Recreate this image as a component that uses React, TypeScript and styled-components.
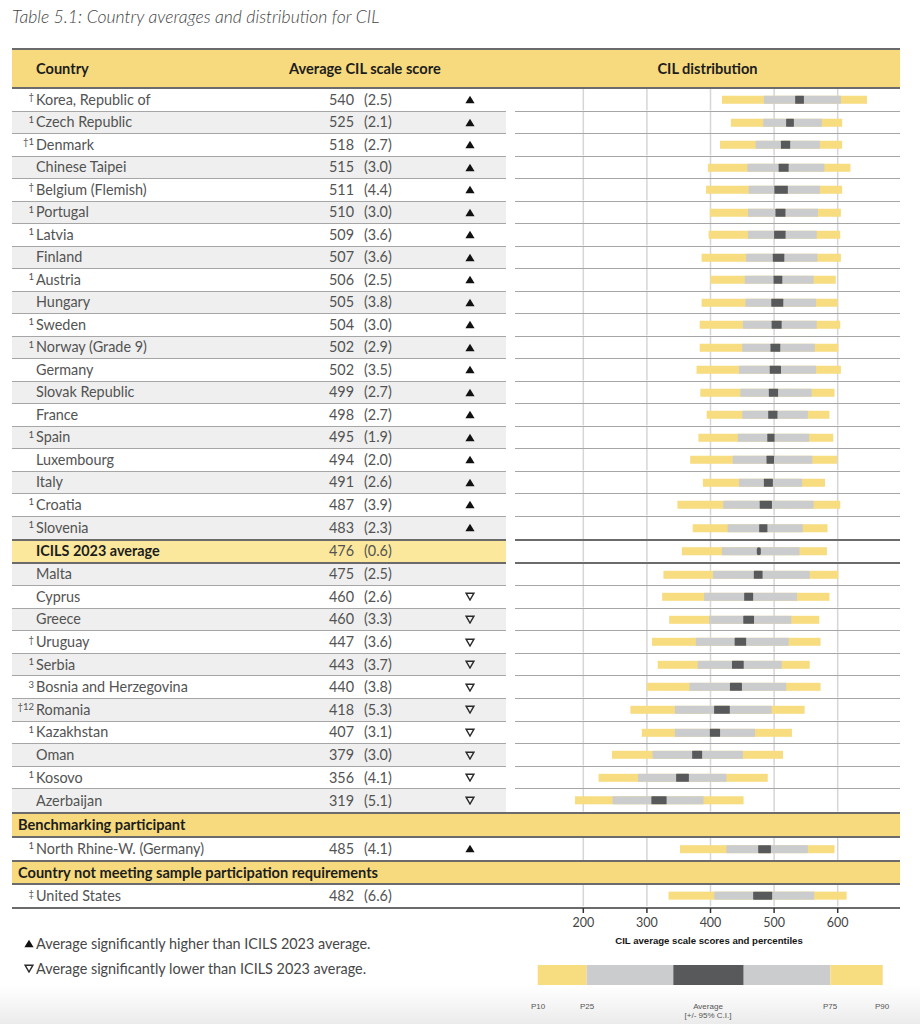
import React from 'react';
import styled, { createGlobalStyle } from 'styled-components';

const GlobalStyle = createGlobalStyle`
  html, body { margin: 0; padding: 0; background: #fff; }
`;

const CHART_W = 385;
const X200 = 68.3;
const PX = 0.636;
const xOf = (v: number) => X200 + (v - 200) * PX;
const GRID = [200, 300, 400, 500, 600];

const C = {
  yellow: '#f7da7e',
  avgYellow: '#fbe89c',
  zebra: '#eeefee',
  barYellow: '#f7dc80',
  barGray: '#cbcccd',
  barDark: '#58595b',
  rule: '#a6a6a6',
  dark: '#6b6b6b',
  grid: '#d6d6d6',
  text: '#535353',
};

type Sig = 'up' | 'down' | undefined;
type Entry = {
  sup?: string;
  name: string;
  score: number;
  se: string;
  sig?: Sig;
  p: [number, number, number, number];
};

const above: Entry[] = [
  { sup: '†', name: 'Korea, Republic of', score: 540, se: '2.5', sig: 'up', p: [418, 484, 605, 646] },
  { sup: '1', name: 'Czech Republic', score: 525, se: '2.1', sig: 'up', p: [432, 483, 575, 607] },
  { sup: '†1', name: 'Denmark', score: 518, se: '2.7', sig: 'up', p: [415, 471, 572, 607] },
  { name: 'Chinese Taipei', score: 515, se: '3.0', sig: 'up', p: [396, 458, 579, 620] },
  { sup: '†', name: 'Belgium (Flemish)', score: 511, se: '4.4', sig: 'up', p: [393, 460, 572, 607] },
  { sup: '1', name: 'Portugal', score: 510, se: '3.0', sig: 'up', p: [399, 459, 569, 605] },
  { sup: '1', name: 'Latvia', score: 509, se: '3.6', sig: 'up', p: [397, 459, 567, 604] },
  { name: 'Finland', score: 507, se: '3.6', sig: 'up', p: [386, 456, 568, 605] },
  { sup: '1', name: 'Austria', score: 506, se: '2.5', sig: 'up', p: [400, 454, 562, 597] },
  { name: 'Hungary', score: 505, se: '3.8', sig: 'up', p: [386, 455, 566, 600] },
  { sup: '1', name: 'Sweden', score: 504, se: '3.0', sig: 'up', p: [383, 451, 567, 604] },
  { sup: '1', name: 'Norway (Grade 9)', score: 502, se: '2.9', sig: 'up', p: [383, 450, 564, 601] },
  { name: 'Germany', score: 502, se: '3.5', sig: 'up', p: [378, 445, 566, 605] },
  { name: 'Slovak Republic', score: 499, se: '2.7', sig: 'up', p: [384, 447, 559, 595] },
  { name: 'France', score: 498, se: '2.7', sig: 'up', p: [394, 450, 553, 587] },
  { sup: '1', name: 'Spain', score: 495, se: '1.9', sig: 'up', p: [381, 443, 555, 593] },
  { name: 'Luxembourg', score: 494, se: '2.0', sig: 'up', p: [368, 435, 560, 599] },
  { name: 'Italy', score: 491, se: '2.6', sig: 'up', p: [388, 445, 544, 580] },
  { sup: '1', name: 'Croatia', score: 487, se: '3.9', sig: 'up', p: [348, 420, 562, 604] },
  { sup: '1', name: 'Slovenia', score: 483, se: '2.3', sig: 'up', p: [372, 427, 545, 584] },
];

const average: Entry = { name: 'ICILS 2023 average', score: 476, se: '0.6', p: [355, 418, 540, 583] };

const below: Entry[] = [
  { name: 'Malta', score: 475, se: '2.5', p: [326, 404, 556, 601] },
  { name: 'Cyprus', score: 460, se: '2.6', sig: 'down', p: [324, 390, 536, 587] },
  { name: 'Greece', score: 460, se: '3.3', sig: 'down', p: [335, 398, 527, 571] },
  { sup: '†', name: 'Uruguay', score: 447, se: '3.6', sig: 'down', p: [308, 377, 523, 573] },
  { sup: '1', name: 'Serbia', score: 443, se: '3.7', sig: 'down', p: [317, 380, 512, 556] },
  { sup: '3', name: 'Bosnia and Herzegovina', score: 440, se: '3.8', sig: 'down', p: [300, 367, 519, 573] },
  { sup: '†12', name: 'Romania', score: 418, se: '5.3', sig: 'down', p: [274, 344, 496, 548] },
  { sup: '1', name: 'Kazakhstan', score: 407, se: '3.1', sig: 'down', p: [292, 344, 470, 528] },
  { name: 'Oman', score: 379, se: '3.0', sig: 'down', p: [245, 309, 451, 514] },
  { sup: '1', name: 'Kosovo', score: 356, se: '4.1', sig: 'down', p: [224, 286, 425, 490] },
  { name: 'Azerbaijan', score: 319, se: '5.1', sig: 'down', p: [187, 246, 389, 452] },
];

const benchmark: Entry = { sup: '1', name: 'North Rhine-W. (Germany)', score: 485, se: '4.1', sig: 'up', p: [352, 425, 553, 595] };
const usa: Entry = { sup: '‡', name: 'United States', score: 482, se: '6.6', p: [334, 406, 563, 614] };

/* ---------- layout ---------- */

const Page = styled.div`
  width: 920px;
  height: 1024px;
  box-sizing: border-box;
  padding: 6px 0 0 12px;
  background: linear-gradient(to bottom, #fff 0, #fff 986px, #ebebeb 1024px);
  font-family: Lato, 'Open Sans', 'Liberation Sans', sans-serif;
  color: ${C.text};
  overflow: hidden;
`;

const Title = styled.h1`
  margin: 0;
  font-size: 17.6px;
  line-height: 22px;
  font-style: italic;
  font-weight: 300;
  color: #444;
`;

const Table = styled.div`
  margin-top: 20px;
  width: 888px;
`;

const Columns = `
  display: grid;
  grid-template-columns: 494px 9px 385px;
`;

const HeaderRow = styled.div`
  ${Columns}
  height: 41px;
  box-sizing: border-box;
  align-items: center;
  background: ${C.yellow};
  border-top: 2px solid ${C.dark};
  border-bottom: 2px solid ${C.dark};
  font-size: 14.6px;
  font-weight: 700;
  color: #1d1d1d;
`;

const HeaderLeft = styled.div`
  display: grid;
  grid-template-columns: 277px auto;
`;

const HeaderCountry = styled.span`
  padding-left: 24px;
`;

const HeaderChart = styled.div`
  grid-column: 3;
  text-align: center;
`;

const DataRow = styled.div<{ $h: number; $closing?: boolean }>`
  ${Columns}
  height: ${(p) => p.$h}px;
  box-sizing: border-box;
  border-bottom: ${(p) => (p.$closing ? `2px solid ${C.dark}` : 'none')};
`;

type Tone = 'white' | 'gray' | 'avg';
type Edge = 'thin' | 'none' | 'thick';

const edgeCss = (e: Edge) =>
  e === 'thin' ? `1px solid ${C.rule}` : e === 'thick' ? `2px solid ${C.dark}` : 'none';

const LeftCell = styled.div<{ $tone: Tone; $top: Edge; $bottom: Edge }>`
  display: grid;
  grid-template-columns: 24px 282px 36px 10px 72px 1fr;
  align-items: center;
  box-sizing: border-box;
  background: ${(p) => (p.$tone === 'gray' ? C.zebra : p.$tone === 'avg' ? C.avgYellow : '#fff')};
  border-top: ${(p) => edgeCss(p.$top)};
  border-bottom: ${(p) => edgeCss(p.$bottom)};
  font-size: 14.4px;
  line-height: 18px;
  white-space: nowrap;
`;

const Sup = styled.span`
  font-size: 9.5px;
  line-height: 9px;
  text-align: right;
  padding-right: 2px;
  transform: translateY(-3px);
`;

const Name = styled.span<{ $strong?: boolean }>`
  font-weight: ${(p) => (p.$strong ? 700 : 400)};
  color: ${(p) => (p.$strong ? '#1d1d1d' : C.text)};
`;

const Score = styled.span`
  grid-column: 3;
  text-align: right;
`;

const SE = styled.span`
  grid-column: 5;
`;

const SigCell = styled.span`
  grid-column: 6;
  padding-left: 29px;
  display: flex;
  align-items: center;
`;

const ChartCell = styled.div<{ $top: Edge; $bottom: Edge }>`
  grid-column: 3;
  box-sizing: border-box;
  border-top: ${(p) => edgeCss(p.$top)};
  border-bottom: ${(p) => edgeCss(p.$bottom)};
  overflow: hidden;
`;

const ChartSvg = styled.svg`
  display: block;
  width: ${CHART_W}px;
  height: 100%;
`;

const SectionRow = styled.div`
  height: 25.5px;
  box-sizing: border-box;
  display: flex;
  align-items: center;
  padding: 0 0 1px 6px;
  background: ${C.yellow};
  border-top: 2px solid ${C.dark};
  border-bottom: 2px solid ${C.dark};
  font-size: 14.6px;
  font-weight: 700;
  color: #1d1d1d;
`;

const Footer = styled.div`
  ${Columns}
  width: 888px;
`;

const Notes = styled.div`
  padding: 22px 0 0 12px;
  display: flex;
  flex-direction: column;
  font-size: 14.4px;
  line-height: 25px;
  color: #474747;
`;

const Note = styled.div`
  display: flex;
  align-items: center;
  gap: 2px;
`;

const ChartFoot = styled.div`
  grid-column: 3;
  display: flex;
  flex-direction: column;
`;

const AxisSvg = styled.svg`
  display: block;
  width: ${CHART_W}px;
  height: 26px;
  margin-top: -1px;
`;

const Caption = styled.div`
  font-family: 'Liberation Sans', Arial, sans-serif;
  font-size: 9.6px;
  font-weight: 700;
  line-height: 14px;
  color: #151515;
  text-align: center;
  padding-left: 3px;
`;

const LegendSvg = styled.svg`
  display: block;
  width: ${CHART_W}px;
  height: 75px;
`;

/* ---------- drawings ---------- */

function UpTri() {
  return (
    <svg width="10" height="9" viewBox="0 0 10 9">
      <path d="M5 0.8 L9.6 8.2 L0.4 8.2 Z" fill="#111" />
    </svg>
  );
}

function DownTri() {
  return (
    <svg width="10" height="9" viewBox="0 0 10 9">
      <path d="M1.1 1.2 L8.9 1.2 L5 8 Z" fill="none" stroke="#2a2a2a" strokeWidth="1.4" strokeLinejoin="miter" />
    </svg>
  );
}

function Sign({ sig }: { sig: Sig }) {
  if (sig === 'up') return <UpTri />;
  if (sig === 'down') return <DownTri />;
  return null;
}

function Distribution({ e }: { e: Entry }) {
  const [p10, p25, p75, p90] = e.p;
  const half = 1.96 * parseFloat(e.se) * PX + 1.25;
  const cx = xOf(e.score);
  const w = half * 2;
  return (
    <ChartSvg>
      {GRID.map((g) => (
        <line key={g} x1={xOf(g)} x2={xOf(g)} y1="0" y2="100%" stroke={C.grid} strokeWidth="1.5" />
      ))}
      <svg y="50%" overflow="visible">
        <g transform="translate(0,-4)">
          <rect x={xOf(p10)} y="0" width={xOf(p90) - xOf(p10)} height="8" fill={C.barYellow} />
          <rect x={xOf(p25)} y="0" width={xOf(p75) - xOf(p25)} height="8" fill={C.barGray} />
          <rect x={cx - half} y="0" width={w} height="8" rx={w < 6 ? w / 2 : 0.6} fill={C.barDark} />
        </g>
      </svg>
    </ChartSvg>
  );
}

function Row({
  e,
  tone,
  h = 22.5,
  top = 'none',
  bottom = 'thin',
  strong,
  closing,
}: {
  e: Entry;
  tone: Tone;
  h?: number;
  top?: Edge;
  bottom?: Edge;
  strong?: boolean;
  closing?: boolean;
}) {
  return (
    <DataRow $h={h} $closing={closing}>
      <LeftCell $tone={tone} $top={top} $bottom={bottom}>
        <Sup>{e.sup ?? ''}</Sup>
        <Name $strong={strong}>{e.name}</Name>
        <Score>{e.score}</Score>
        <SE>({e.se})</SE>
        <SigCell>
          <Sign sig={e.sig} />
        </SigCell>
      </LeftCell>
      <ChartCell $top={top} $bottom={bottom}>
        <Distribution e={e} />
      </ChartCell>
    </DataRow>
  );
}

function Axis() {
  return (
    <AxisSvg>
      {GRID.map((g) => (
        <g key={g}>
          <line x1={xOf(g)} x2={xOf(g)} y1="0" y2="5" stroke="#333" strokeWidth="1.5" />
          <text
            x={xOf(g)}
            y="18.5"
            textAnchor="middle"
            fontFamily="Lato, 'Open Sans', sans-serif"
            fontSize="12.5"
            fill="#444"
          >
            {g}
          </text>
        </g>
      ))}
    </AxisSvg>
  );
}

function Legend() {
  const segs: [number, number, string][] = [
    [22.7, 71.7, C.barYellow],
    [71.7, 158.3, C.barGray],
    [158.3, 228.7, C.barDark],
    [228.7, 315.3, C.barGray],
    [315.3, 367.7, C.barYellow],
  ];
  const labels: [number, string][] = [
    [23, 'P10'],
    [72, 'P25'],
    [315, 'P75'],
    [367, 'P90'],
  ];
  const font = "'Liberation Sans', Arial, sans-serif";
  return (
    <LegendSvg>
      {segs.map(([a, b, c]) => (
        <rect key={a} x={a} y="17" width={b - a} height="20" fill={c} />
      ))}
      {labels.map(([x, t]) => (
        <text key={t} x={x} y="61" textAnchor="middle" fontFamily={font} fontSize="8" fill="#555">
          {t}
        </text>
      ))}
      <text x="193" y="61" textAnchor="middle" fontFamily={font} fontSize="8" fill="#555">
        Average
      </text>
      <text x="193" y="70" textAnchor="middle" fontFamily={font} fontSize="8" fill="#555">
        [+/- 95% C.I.]
      </text>
    </LegendSvg>
  );
}

export default function App() {
  return (
    <>
      <GlobalStyle />
      <Page>
        <Title>Table 5.1: Country averages and distribution for CIL</Title>
        <Table>
          <HeaderRow>
            <HeaderLeft>
              <HeaderCountry>Country</HeaderCountry>
              <span>Average CIL scale score</span>
            </HeaderLeft>
            <HeaderChart>CIL distribution</HeaderChart>
          </HeaderRow>

          {above.map((e, i) => (
            <Row
              key={e.name}
              e={e}
              tone={i % 2 ? 'gray' : 'white'}
              bottom={i === above.length - 1 ? 'none' : 'thin'}
            />
          ))}

          <Row e={average} tone="avg" h={24.5} top="thick" bottom="thick" strong />

          {below.map((e, i) => (
            <Row
              key={e.name}
              e={e}
              tone={i % 2 ? 'white' : 'gray'}
              h={22.6}
              bottom={i === below.length - 1 ? 'none' : 'thin'}
            />
          ))}

          <SectionRow>Benchmarking participant</SectionRow>
          <Row e={benchmark} tone="white" h={22.4} bottom="none" />
          <SectionRow>Country not meeting sample participation requirements</SectionRow>
          <Row e={usa} tone="white" h={23.3} bottom="none" closing />
        </Table>

        <Footer>
          <Notes>
            <Note>
              <UpTri />
              <span>Average significantly higher than ICILS 2023 average.</span>
            </Note>
            <Note>
              <DownTri />
              <span>Average significantly lower than ICILS 2023 average.</span>
            </Note>
          </Notes>
          <ChartFoot>
            <Axis />
            <Caption>CIL average scale scores and percentiles</Caption>
            <Legend />
          </ChartFoot>
        </Footer>
      </Page>
    </>
  );
}
